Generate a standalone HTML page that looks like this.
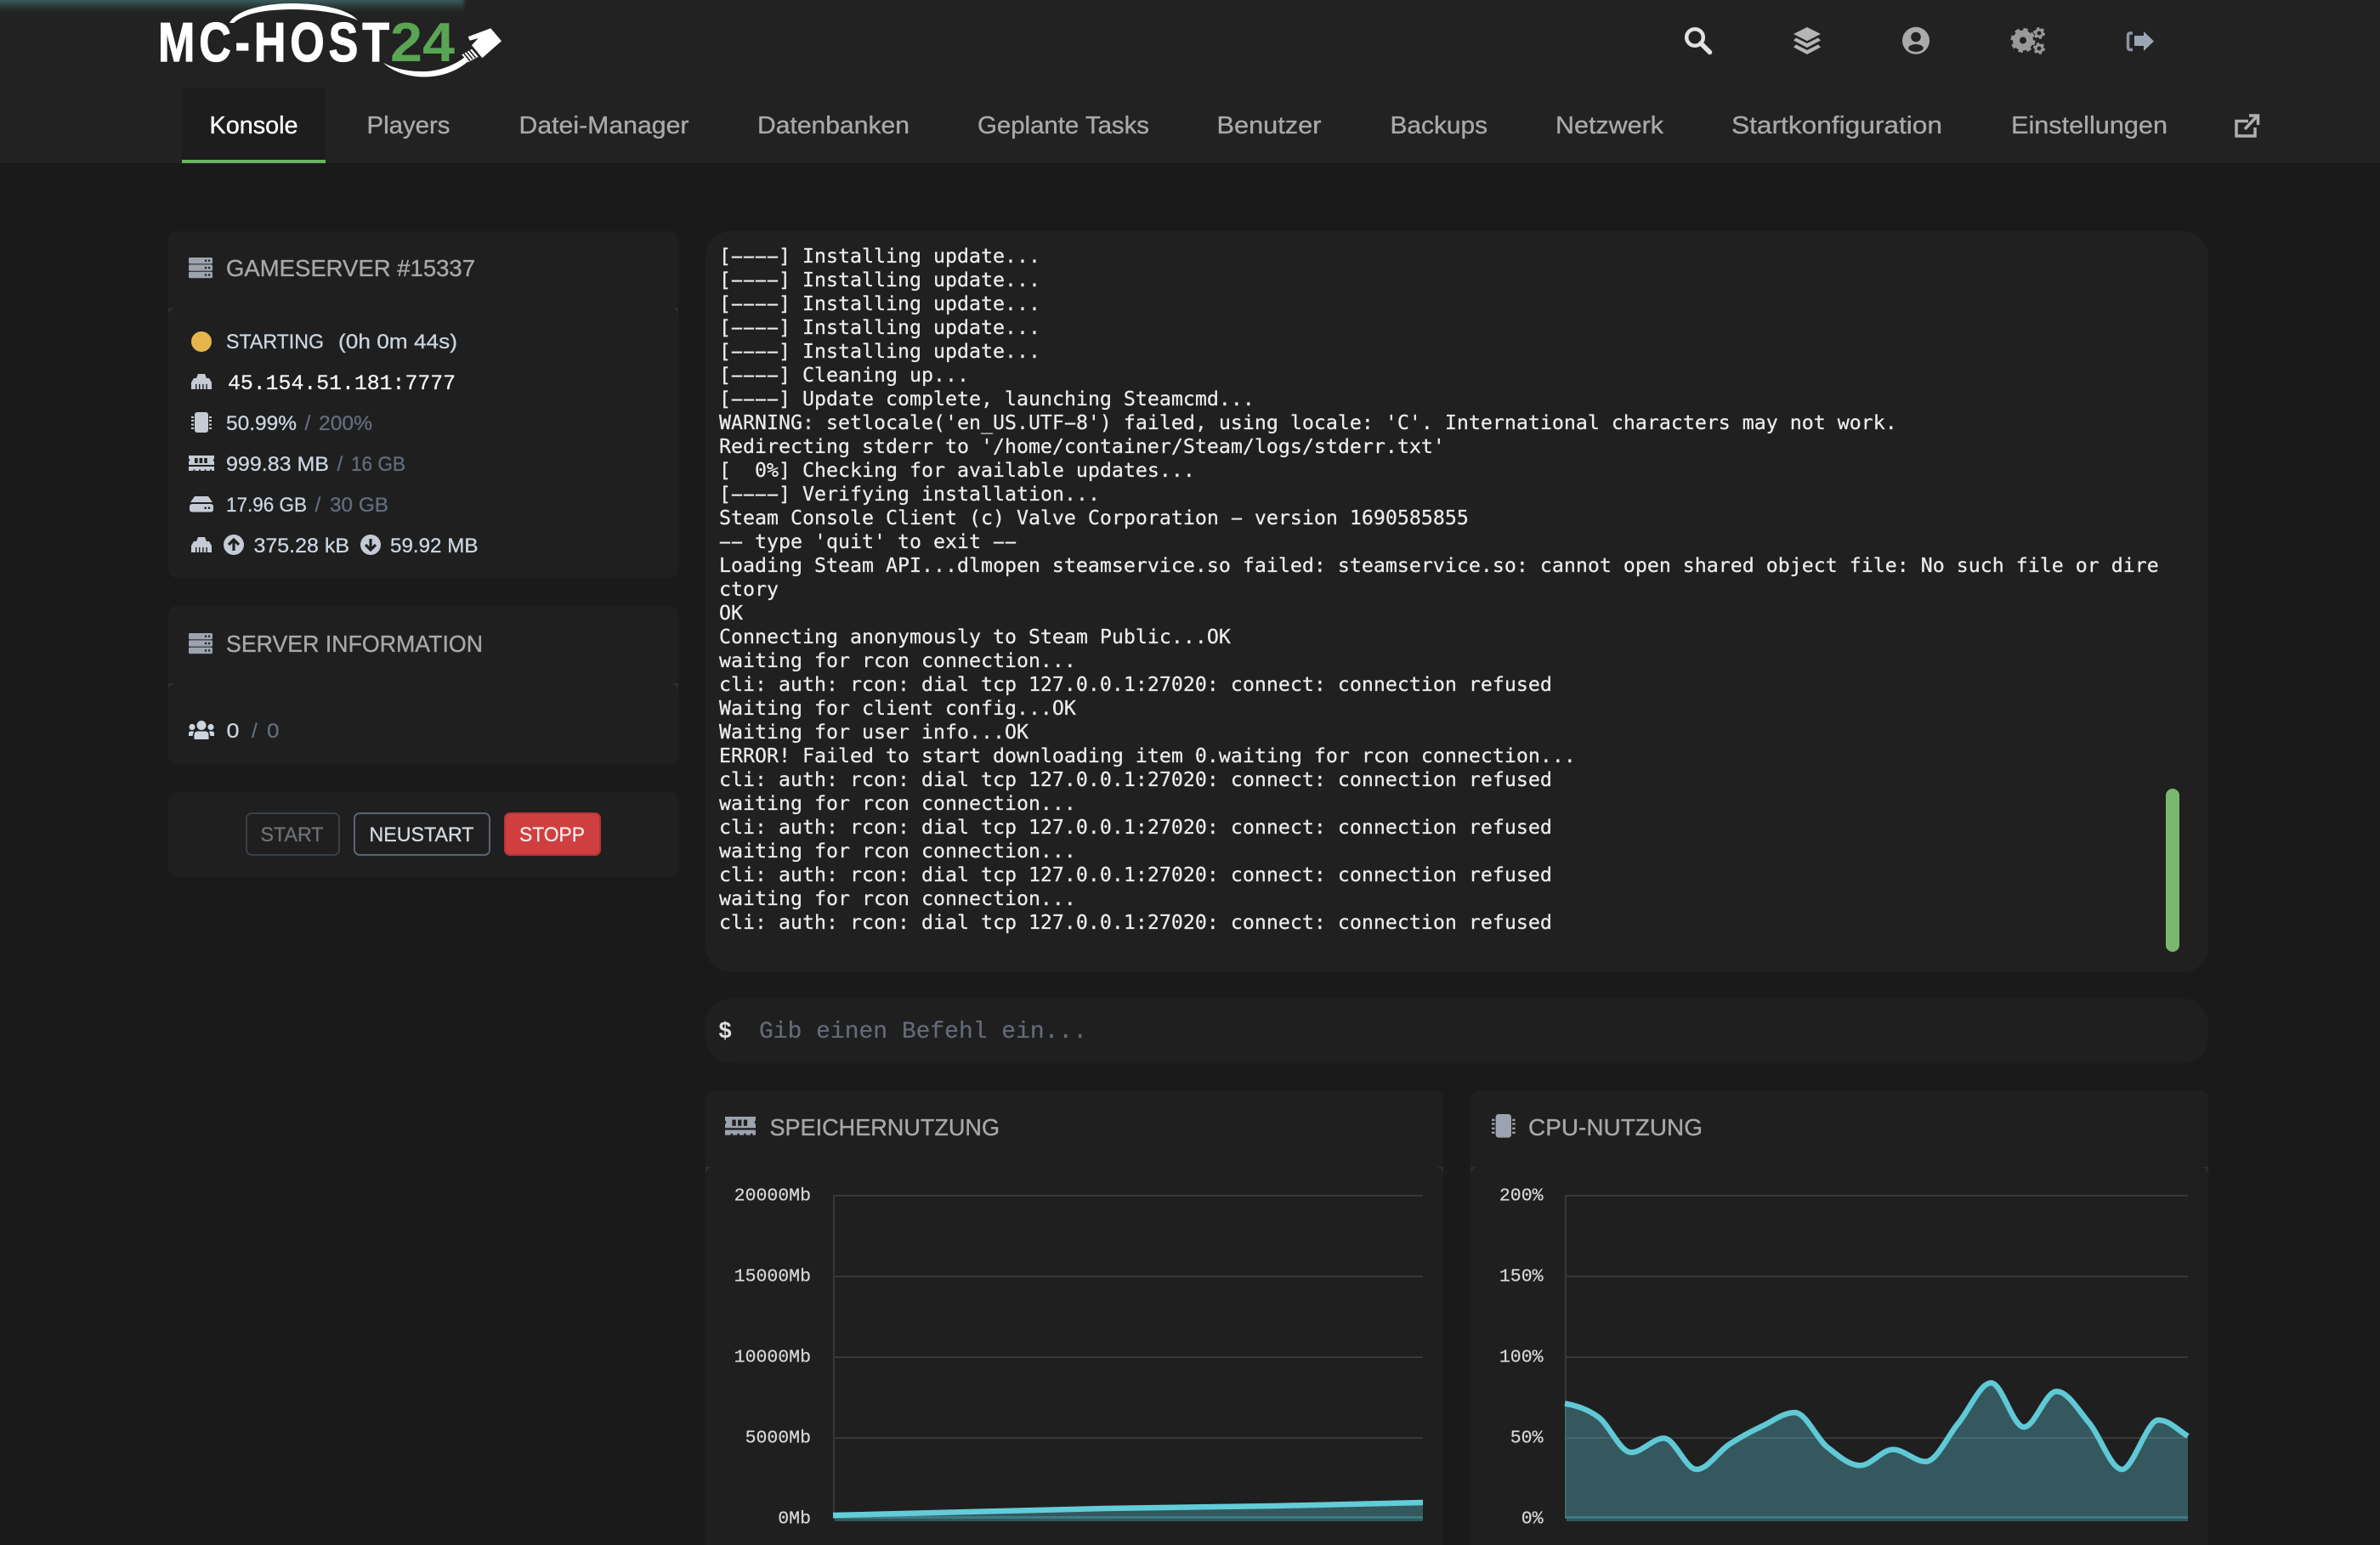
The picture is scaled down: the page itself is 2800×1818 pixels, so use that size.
<!DOCTYPE html>
<html lang="de">
<head>
<meta charset="utf-8">
<title>MC-HOST24 Konsole</title>
<style>
html,body{margin:0;padding:0;background:#1a1a1a}
body{position:relative;width:2800px;height:1818px;overflow:hidden;font-family:"Liberation Sans",sans-serif}
.a{position:absolute;box-sizing:border-box}
.hdr{left:0;top:0;width:2800px;height:192px;background:#222;overflow:hidden}
.bar{left:-10px;top:-3px;width:556px;height:17px;background:linear-gradient(#446a6a,#2c3e3e 55%,#222);filter:blur(2px)}
.tab{left:214px;top:104px;width:169px;height:88px;background:#1d1d1d;border-bottom:4px solid #6bb35f}
.p{background:#1f1f1f}
.top{border-radius:10px 10px 0 0}
.w{background:#2c2c2c;height:10px}
.b{background:#1f1f1f;border-radius:10px}
.con{left:830px;top:272px;width:1768px;height:872px;background:#202020;border-radius:30px}
.inp{left:830px;top:1175px;width:1768px;height:76px;background:#1f1f1f;border-radius:30px}
.sb{left:2548px;top:928px;width:16px;height:192px;border-radius:8px;background:#79b86c}
pre{position:absolute;left:846px;top:288px;margin:0;font:23.25px/28px "DejaVu Sans Mono","Liberation Mono",monospace;color:#ececec;-webkit-text-stroke:.25px #ececec}
pre i{font-style:normal;display:inline-block;width:14px;transform:scaleX(2);transform-origin:50% 50%}
.btn{border-radius:7px;height:51px;top:956px}
svg{position:absolute;left:0;top:0}
.n{font-size:29px;fill:#a9a9a9;stroke:#a9a9a9;stroke-width:.35px}
.h{font-size:28px;fill:#a8a8a8;stroke:#a8a8a8;stroke-width:.35px}
.t{font-size:24.5px;fill:#cbd5e0;stroke:#cbd5e0;stroke-width:.3px}
.d{font-size:24.5px;fill:#626d7d;stroke:#626d7d;stroke-width:.3px}
.l{font:21.5px "Liberation Mono",monospace;fill:#d8d8d8;stroke:#d8d8d8;stroke-width:.2px;text-anchor:end}
</style>
</head>
<body>
<div class="a hdr"><div class="a bar"></div></div>
<div class="a tab"></div>

<div class="a p top" style="left:198px;top:272px;width:600px;height:90px"></div>
<div class="a w" style="left:198px;top:362px;width:600px"></div>
<div class="a b" style="left:198px;top:362px;width:600px;height:318px"></div>

<div class="a p top" style="left:198px;top:713px;width:600px;height:91px"></div>
<div class="a w" style="left:198px;top:804px;width:600px"></div>
<div class="a b" style="left:198px;top:804px;width:600px;height:96px"></div>

<div class="a b" style="left:198px;top:932px;width:600px;height:100px"></div>
<div class="a btn" style="left:289px;width:111px;border:2px solid #3a3f47"></div>
<div class="a btn" style="left:416px;width:161px;border:2px solid #5a6370"></div>
<div class="a btn" style="left:593px;width:114px;background:#d03f3f;border:2px solid #b93434"></div>

<div class="a con"></div>
<div class="a sb"></div>
<div class="a inp"></div>

<div class="a p top" style="left:830px;top:1283px;width:868px;height:90px"></div>
<div class="a w" style="left:830px;top:1373px;width:868px"></div>
<div class="a p" style="left:830px;top:1373px;width:868px;height:445px;border-radius:10px 10px 0 0"></div>

<div class="a p top" style="left:1730px;top:1283px;width:868px;height:90px"></div>
<div class="a w" style="left:1730px;top:1373px;width:868px"></div>
<div class="a p" style="left:1730px;top:1373px;width:868px;height:445px;border-radius:10px 10px 0 0"></div>

<pre>[<i>-</i><i>-</i><i>-</i><i>-</i>] Installing update...
[<i>-</i><i>-</i><i>-</i><i>-</i>] Installing update...
[<i>-</i><i>-</i><i>-</i><i>-</i>] Installing update...
[<i>-</i><i>-</i><i>-</i><i>-</i>] Installing update...
[<i>-</i><i>-</i><i>-</i><i>-</i>] Installing update...
[<i>-</i><i>-</i><i>-</i><i>-</i>] Cleaning up...
[<i>-</i><i>-</i><i>-</i><i>-</i>] Update complete, launching Steamcmd...
WARNING: setlocale('en_US.UTF<i>-</i>8') failed, using locale: 'C'. International characters may not work.
Redirecting stderr to '/home/container/Steam/logs/stderr.txt'
[  0%] Checking for available updates...
[<i>-</i><i>-</i><i>-</i><i>-</i>] Verifying installation...
Steam Console Client (c) Valve Corporation <i>-</i> version 1690585855
<i>-</i><i>-</i> type 'quit' to exit <i>-</i><i>-</i>
Loading Steam API...dlmopen steamservice.so failed: steamservice.so: cannot open shared object file: No such file or dire
ctory
OK
Connecting anonymously to Steam Public...OK
waiting for rcon connection...
cli: auth: rcon: dial tcp 127.0.0.1:27020: connect: connection refused
Waiting for client config...OK
Waiting for user info...OK
ERROR! Failed to start downloading item 0.waiting for rcon connection...
cli: auth: rcon: dial tcp 127.0.0.1:27020: connect: connection refused
waiting for rcon connection...
cli: auth: rcon: dial tcp 127.0.0.1:27020: connect: connection refused
waiting for rcon connection...
cli: auth: rcon: dial tcp 127.0.0.1:27020: connect: connection refused
waiting for rcon connection...
cli: auth: rcon: dial tcp 127.0.0.1:27020: connect: connection refused</pre>

<svg width="2800" height="1818" viewBox="0 0 2800 1818" xmlns="http://www.w3.org/2000/svg">
<defs>
<g id="srv" fill="#9ca3af">
  <rect width="28" height="7.4" rx="1.5"/><rect y="8.4" width="28" height="7.4" rx="1.5"/><rect y="16.8" width="28" height="7.4" rx="1.5"/>
  <g fill="#1f1f1f"><rect x="19" y="2.6" width="2.2" height="2.2"/><rect x="23" y="2.6" width="2.2" height="2.2"/><rect x="19" y="11" width="2.2" height="2.2"/><rect x="23" y="11" width="2.2" height="2.2"/><rect x="19" y="19.4" width="2.2" height="2.2"/><rect x="23" y="19.4" width="2.2" height="2.2"/></g>
</g>
<g id="eth">
  <path fill="#c5cbd5" d="M8 0H16L18 5H21L24 10V18H0V10L3 5H6Z"/>
  <g fill="#1f1f1f"><rect x="5" y="12" width="1.4" height="6"/><rect x="9" y="12" width="1.4" height="6"/><rect x="13.2" y="12" width="1.4" height="6"/><rect x="17.4" y="12" width="1.4" height="6"/></g>
</g>
<g id="cpu">
  <rect x="4" width="16" height="24" rx="3"/>
  <rect y="5" width="3" height="2"/><rect y="9" width="3" height="2"/><rect y="13.6" width="3" height="2"/><rect y="18" width="3" height="2"/>
  <rect x="21" y="5" width="3" height="2"/><rect x="21" y="9" width="3" height="2"/><rect x="21" y="13.6" width="3" height="2"/><rect x="21" y="18" width="3" height="2"/>
</g>
<g id="ram">
  <path d="M0 0H30V3.5L28.6 5.5 30 7.5V11H0V7.5L1.4 5.5 0 3.5Z"/>
  <path d="M0 13H30V18H27V16.5H25V18H20.5V16.5H18.5V18H14V16.5H12V18H7.5V16.5H5.5V18H0Z"/>
  <g fill="#1f1f1f"><rect x="7" y="3" width="3.6" height="6"/><rect x="12.6" y="3" width="3.6" height="6"/><rect x="18.2" y="3" width="3.6" height="6"/></g>
</g>
</defs>

<!-- logo -->
<g fill="#fff">
  <text transform="translate(186 72) scale(.8 1)" font-size="65" font-weight="700" stroke="#fff" stroke-width="1.200" textLength="340" lengthAdjust="spacing">MC-HOST</text>
  <path d="M270 27C279 10 316 4 344 4 378 4 410 11 421 24 403 16 374 11 345 11 315 11 288 15 275 27Z"/>
  <path d="M451 74C463 85 480 90 497 90.5 520 91 539 83 552 71L547 67C532 79 511 85 495 84 477 84 463 80 451 74Z"/>
  <path d="M550.7 43.3 577.3 33.3 590 48.3 567.3 68.3 555 53.3 562.7 45 552.7 47.7Z"/>
  <path d="M555 57.7 562.7 66.7 550.7 73.3 543.3 64.3Z"/>
  <g stroke="#222" stroke-width="1.6"><path d="M548.5 60.5 556 69.5M545.5 62.5 553 71.7M552 59 559.5 68"/></g>
</g>
<text x="459" y="72" font-size="65" font-weight="700" fill="#5aa553" textLength="76" lengthAdjust="spacingAndGlyphs">24</text>

<!-- nav -->
<text x="246.500" y="157" class="n" style="fill:#fff;stroke:#fff" textLength="104" lengthAdjust="spacingAndGlyphs">Konsole</text>
<text x="431.500" y="157" class="n" textLength="98" lengthAdjust="spacingAndGlyphs">Players</text>
<text x="610.500" y="157" class="n" textLength="200" lengthAdjust="spacingAndGlyphs">Datei-Manager</text>
<text x="891" y="157" class="n" textLength="179" lengthAdjust="spacingAndGlyphs">Datenbanken</text>
<text x="1150" y="157" class="n" textLength="202" lengthAdjust="spacingAndGlyphs">Geplante Tasks</text>
<text x="1431.500" y="157" class="n" textLength="123" lengthAdjust="spacingAndGlyphs">Benutzer</text>
<text x="1635.500" y="157" class="n" textLength="114.500" lengthAdjust="spacingAndGlyphs">Backups</text>
<text x="1830" y="157" class="n" textLength="127" lengthAdjust="spacingAndGlyphs">Netzwerk</text>
<text x="2037" y="157" class="n" textLength="248" lengthAdjust="spacingAndGlyphs">Startkonfiguration</text>
<text x="2366" y="157" class="n" textLength="184" lengthAdjust="spacingAndGlyphs">Einstellungen</text>
<g fill="none" stroke="#b0b0b0" stroke-width="3.5">
  <path d="M2645 142.500H2631V160H2653V150"/>
  <path d="M2641 152 2655 137M2646 136H2656.500V147"/>
</g>

<!-- top icons -->
<g fill="none" stroke="#e2e2e2"><circle cx="1994" cy="44" r="9.800" stroke-width="4.500"/><path d="M2001 51 2011.500 61.500" stroke-width="5.500" stroke-linecap="round"/></g>
<g fill="#b5b5b5">
  <path d="M2126 32 2142 40 2126 48.300 2110 40Z"/>
  <path d="M2113 44.500 2126 51 2139 44.500 2142 47.500 2126 56 2110 47.500Z"/>
  <path d="M2113 52.500 2126 59 2139 52.500 2142 55.500 2126 64 2110 55.500Z"/>
</g>
<circle cx="2254" cy="47.800" r="16" fill="#aaa"/>
<circle cx="2254" cy="43.500" r="5.800" fill="#222"/>
<ellipse cx="2254" cy="56.500" rx="8.800" ry="4.500" fill="#222"/>
<g fill="none" stroke="#999">
  <circle cx="2380" cy="47.500" r="8" stroke-width="8"/>
  <circle cx="2380" cy="47.500" r="13" stroke-width="3" stroke-dasharray="5.500 4.710"/>
  <circle cx="2399" cy="39" r="4" stroke-width="3"/>
  <circle cx="2399" cy="39" r="6" stroke-width="2" stroke-dasharray="3 3.280"/>
  <circle cx="2399" cy="57" r="4" stroke-width="3"/>
  <circle cx="2399" cy="57" r="6" stroke-width="2" stroke-dasharray="3 3.280"/>
</g>
<path d="M2509 39H2506Q2503.500 39 2503.500 42V55Q2503.500 58.500 2506 58.500H2509" fill="none" stroke="#8a94a2" stroke-width="3.500"/>
<path d="M2511 42H2522V37L2534 48.500 2522 60V54H2511Z" fill="#9ca5b3"/>

<!-- gameserver panel -->
<use href="#srv" x="222" y="303"/>
<text x="266" y="325" class="h" textLength="293" lengthAdjust="spacingAndGlyphs">GAMESERVER #15337</text>
<ellipse cx="237" cy="402" rx="12" ry="12" fill="#e6b64c"/>
<text x="266" y="410" class="t" textLength="115" lengthAdjust="spacingAndGlyphs">STARTING</text>
<text x="398" y="410" class="t" textLength="140" lengthAdjust="spacingAndGlyphs">(0h 0m 44s)</text>
<use href="#eth" x="225" y="440"/>
<text x="268" y="458" font-family="Liberation Mono, monospace" font-size="25" fill="#f5f5f5" stroke="#f5f5f5" stroke-width=".3" textLength="268" lengthAdjust="spacingAndGlyphs">45.154.51.181:7777</text>
<use href="#cpu" x="225" y="485" fill="#c5cbd5"/>
<text x="266" y="506" class="t" textLength="83" lengthAdjust="spacingAndGlyphs">50.99%</text>
<text x="358.500" y="506" class="d">/</text>
<text x="375" y="506" class="d" textLength="63" lengthAdjust="spacingAndGlyphs">200%</text>
<use href="#ram" x="222" y="536" fill="#c5cbd5"/>
<text x="266" y="554" class="t" textLength="121" lengthAdjust="spacingAndGlyphs">999.83 MB</text>
<text x="396.500" y="554" class="d">/</text>
<text x="413" y="554" class="d" textLength="64" lengthAdjust="spacingAndGlyphs">16 GB</text>
<path d="M229 584H245L250 591H224Z" fill="#c5cbd5"/>
<rect x="223" y="593" width="28" height="9.500" rx="3" fill="#c5cbd5"/>
<circle cx="241.700" cy="597.700" r="1.300" fill="#1f1f1f"/><circle cx="246" cy="597.700" r="1.300" fill="#1f1f1f"/>
<text x="266" y="602" class="t" textLength="95" lengthAdjust="spacingAndGlyphs">17.96 GB</text>
<text x="370.500" y="602" class="d">/</text>
<text x="388" y="602" class="d" textLength="69" lengthAdjust="spacingAndGlyphs">30 GB</text>
<use href="#eth" x="225" y="632"/>
<circle cx="275" cy="641" r="12" fill="#c5cbd5"/>
<path d="M275 648V635M269 641 275 635 281 641" fill="none" stroke="#1f1f1f" stroke-width="3.200"/>
<text x="298.500" y="650" class="t" textLength="112.500" lengthAdjust="spacingAndGlyphs">375.28 kB</text>
<circle cx="436" cy="641" r="12" fill="#c5cbd5"/>
<path d="M436 634V647M430 641 436 647 442 641" fill="none" stroke="#1f1f1f" stroke-width="3.200"/>
<text x="459" y="650" class="t" textLength="103.500" lengthAdjust="spacingAndGlyphs">59.92 MB</text>

<!-- server info -->
<use href="#srv" x="222" y="745"/>
<text x="266" y="767" class="h" textLength="302" lengthAdjust="spacingAndGlyphs">SERVER INFORMATION</text>
<g fill="#cbd5e0">
  <circle cx="237" cy="853.500" r="5.500"/>
  <path d="M228.500 870V865Q228.500 860.500 233 860.500H241Q245.500 860.500 245.500 865V870Z"/>
  <circle cx="226" cy="855.500" r="3.600"/><circle cx="248" cy="855.500" r="3.600"/>
  <path d="M222 866V863Q222 860.500 225 860.500H228L226.500 866Z"/>
  <path d="M252 866V863Q252 860.500 249 860.500H246L247.500 866Z"/>
</g>
<text x="266.500" y="868" class="t" textLength="15" lengthAdjust="spacingAndGlyphs">0</text>
<text x="296" y="868" class="d">/</text>
<text x="314" y="868" class="d" textLength="14.500" lengthAdjust="spacingAndGlyphs">0</text>

<!-- buttons -->
<text x="306.500" y="990" font-size="24.500" fill="#6e7175" stroke="#6e7175" stroke-width=".3" textLength="74" lengthAdjust="spacingAndGlyphs">START</text>
<text x="434.500" y="990" font-size="24.500" fill="#d6dbe2" stroke="#d6dbe2" stroke-width=".3" textLength="123" lengthAdjust="spacingAndGlyphs">NEUSTART</text>
<text x="611" y="990" font-size="24.500" fill="#f6e9e9" stroke="#f6e9e9" stroke-width=".3" textLength="77" lengthAdjust="spacingAndGlyphs">STOPP</text>

<!-- input -->
<text x="845" y="1221" font-family="Liberation Mono, monospace" font-size="27" font-weight="700" fill="#e0e0e0">$</text>
<text x="893" y="1221" font-family="Liberation Mono, monospace" font-size="27.500" fill="#646b78" stroke="#646b78" stroke-width=".2" textLength="386" lengthAdjust="spacingAndGlyphs">Gib einen Befehl ein...</text>

<!-- memory chart -->
<use href="#ram" transform="translate(853 1314) scale(1.200)" fill="#9ca3af"/>
<text x="905.500" y="1336" class="h" textLength="270.500" lengthAdjust="spacingAndGlyphs">SPEICHERNUTZUNG</text>
<g fill="none" stroke="#383838" stroke-width="2">
  <path d="M981 1406V1787"/>
  <path d="M980 1407H1674M980 1502H1674M980 1597H1674M980 1692H1674"/>
</g>
<text x="954" y="1412.500" class="l">20000Mb</text>
<text x="954" y="1507.500" class="l">15000Mb</text>
<text x="954" y="1602.500" class="l">10000Mb</text>
<text x="954" y="1697.500" class="l">5000Mb</text>
<text x="954" y="1792.500" class="l">0Mb</text>
<path d="M980 1783 1300 1775 1500 1772 1674 1768V1790H982V1784Z" fill="rgba(95,200,214,.34)"/>
<rect x="980" y="1784" width="694" height="3" fill="#3f7a85"/>
<path d="M980 1783 1300 1775 1500 1772 1674 1768" fill="none" stroke="#62cdd9" stroke-width="6.500"/>

<!-- cpu chart -->
<use href="#cpu" transform="translate(1755 1311) scale(1.150)" fill="#9ca3af"/>
<text x="1798" y="1336" class="h" textLength="205" lengthAdjust="spacingAndGlyphs">CPU-NUTZUNG</text>
<g fill="none" stroke="#383838" stroke-width="2">
  <path d="M1842 1406V1787"/>
  <path d="M1841 1407H2574M1841 1502H2574M1841 1597H2574M1841 1692H2574"/>
</g>
<text x="1815.500" y="1412.500" class="l">200%</text>
<text x="1815.500" y="1507.500" class="l">150%</text>
<text x="1815.500" y="1602.500" class="l">100%</text>
<text x="1815.500" y="1697.500" class="l">50%</text>
<text x="1815.500" y="1792.500" class="l">0%</text>
<path fill="rgba(95,200,214,.34)" d="M1841 1651.500C1855 1654 1867.500 1658 1880.500 1667.500C1893.500 1677 1906 1709 1919 1709C1932 1709 1944.500 1692.400 1957.500 1692.400C1970.500 1692.400 1983 1729 1996 1729C2009 1729 2021.500 1708 2034.500 1699.500C2047.500 1691 2060 1684.400 2073 1678.200C2086 1672 2098.500 1662.100 2111.500 1662.100C2124.500 1662.100 2137 1692.700 2150 1703C2163 1713.300 2175.500 1724.400 2188.500 1724.400C2201.500 1724.400 2214 1705.600 2227 1705.600C2240 1705.600 2252.500 1719.800 2265.500 1719.800C2278.500 1719.800 2291 1690 2304 1674.600C2317 1659 2329.500 1627.300 2342.500 1627.300C2355.500 1627.300 2368 1679.200 2381 1679.200C2394 1679.200 2406.500 1637.200 2419.500 1637.200C2432.500 1637.200 2445 1659 2458 1674.600C2471 1690 2483.500 1729 2496.500 1729C2509.500 1729 2526 1671 2539 1671C2552 1671 2561 1682 2574 1689.900V1790H1843V1787H1841Z"/>
<rect x="1841" y="1784" width="733" height="3" fill="#3f7a85"/>
<path fill="none" stroke="#5fc9d6" stroke-width="6.500" d="M1841 1651.500C1855 1654 1867.500 1658 1880.500 1667.500C1893.500 1677 1906 1709 1919 1709C1932 1709 1944.500 1692.400 1957.500 1692.400C1970.500 1692.400 1983 1729 1996 1729C2009 1729 2021.500 1708 2034.500 1699.500C2047.500 1691 2060 1684.400 2073 1678.200C2086 1672 2098.500 1662.100 2111.500 1662.100C2124.500 1662.100 2137 1692.700 2150 1703C2163 1713.300 2175.500 1724.400 2188.500 1724.400C2201.500 1724.400 2214 1705.600 2227 1705.600C2240 1705.600 2252.500 1719.800 2265.500 1719.800C2278.500 1719.800 2291 1690 2304 1674.600C2317 1659 2329.500 1627.300 2342.500 1627.300C2355.500 1627.300 2368 1679.200 2381 1679.200C2394 1679.200 2406.500 1637.200 2419.500 1637.200C2432.500 1637.200 2445 1659 2458 1674.600C2471 1690 2483.500 1729 2496.500 1729C2509.500 1729 2526 1671 2539 1671C2552 1671 2561 1682 2574 1689.900"/>
</svg>
</body>
</html>
